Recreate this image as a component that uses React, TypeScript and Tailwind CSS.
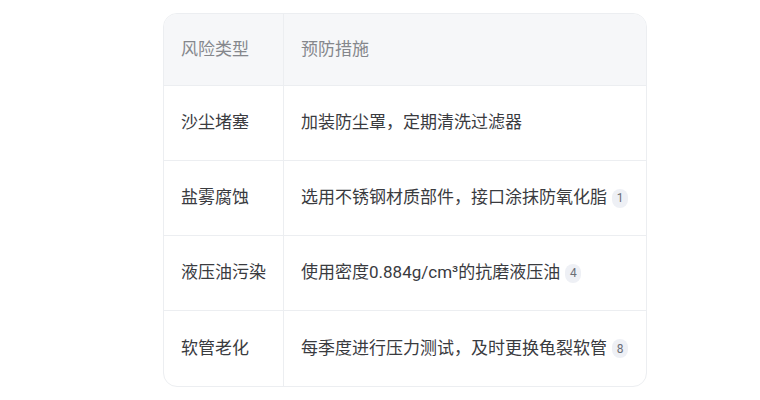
const rows: { risk: string; measure: string; ref: string }[] = [
  { risk: "沙尘堵塞", measure: "加装防尘罩，定期清洗过滤器", ref: "" },
  { risk: "盐雾腐蚀", measure: "选用不锈钢材质部件，接口涂抹防氧化脂", ref: "1" },
  { risk: "液压油污染", measure: "使用密度0.884g/cm³的抗磨液压油", ref: "4" },
  { risk: "软管老化", measure: "每季度进行压力测试，及时更换龟裂软管", ref: "8" },
];

export default function App() {
  return (
    <div
      className="w-[760px] h-[400px] bg-white pt-[13px] pl-[163px]"
      style={{ fontFamily: 'Roboto, "Noto Sans CJK SC", sans-serif' }}
    >
      <div className="w-[484px] rounded-[14px] border border-[#eceef1] overflow-hidden">
        <div className="grid grid-cols-[120px_1fr] h-[72px] bg-[#f6f7f9] border-b border-[#eceef1]">
          <div className="flex items-center pl-[17px] border-r border-[#eceef1] text-[17px] text-[#85878c]">
            风险类型
          </div>
          <div className="flex items-center pl-[17px] text-[17px] text-[#85878c]">预防措施</div>
        </div>
        {rows.map((r, i) => (
          <div
            key={r.risk}
            className={`grid grid-cols-[120px_1fr] h-[75px] ${i < rows.length - 1 ? "border-b border-[#eceef1]" : ""}`}
          >
            <div className="flex items-center pl-[17px] border-r border-[#eceef1] text-[17px] text-[#3a3b3f]">
              {r.risk}
            </div>
            <div className="flex items-center pl-[17px] text-[17px] text-[#3a3b3f]">
              <span>{r.measure}</span>
              {r.ref && (
                <span className="ml-[5px] inline-flex items-center justify-center h-[19px] min-w-[16px] px-[4px] rounded-full bg-[#eef0f5] text-[12px] text-[#6b6e75]">
                  {r.ref}
                </span>
              )}
            </div>
          </div>
        ))}
      </div>
    </div>
  );
}
